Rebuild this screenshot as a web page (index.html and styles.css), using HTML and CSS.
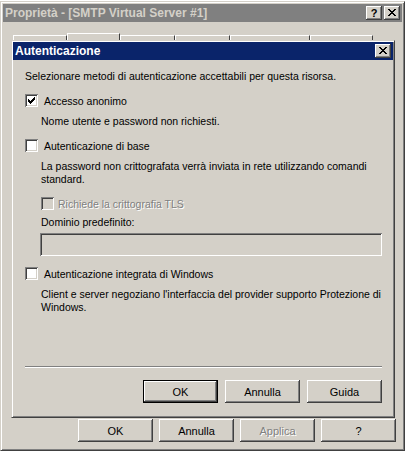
FILE: index.html
```html
<!DOCTYPE html>
<html lang="it">

<head>
    <meta charset="UTF-8">
    <meta name="viewport" content="width=device-width, initial-scale=1.0">
    <title>Autenticazione</title>
    <link rel="stylesheet" href="styles.css">
</head>

<body>
    <div class="window">
        <div class="titlebar inactive">
            <span class="title">Proprietà - [SMTP Virtual Server #1]</span>
            <div class="caption-buttons">
                <span class="cap-btn help">?</span>
                <span class="cap-btn close">
                    <svg width="8" height="7" viewBox="0 0 8 7"><path d="M0 0h2v1h-2zM6 0h2v1h-2zM1 1h2v1h-2zM5 1h2v1h-2zM2 2h4v1h-4zM3 3h2v1h-2zM2 4h4v1h-4zM1 5h2v1h-2zM5 5h2v1h-2zM0 6h2v1h-2zM6 6h2v1h-2z" fill="#000"/></svg>
                </span>
            </div>
        </div>

        <div class="tabs">
            <span class="tab" style="width:54px"></span>
            <span class="tab selected" style="width:53px"></span>
            <span class="tab" style="width:55px"></span>
            <span class="tab" style="width:55px"></span>
            <span class="tab" style="width:80px"></span>
            <span class="tab" style="width:63px"></span>
        </div>

        <div class="dialog">
            <div class="titlebar active">
                <span class="title">Autenticazione</span>
                <span class="cap-btn close">
                    <svg width="8" height="7" viewBox="0 0 8 7"><path d="M0 0h2v1h-2zM6 0h2v1h-2zM1 1h2v1h-2zM5 1h2v1h-2zM2 2h4v1h-4zM3 3h2v1h-2zM2 4h4v1h-4zM1 5h2v1h-2zM5 5h2v1h-2zM0 6h2v1h-2zM6 6h2v1h-2z" fill="#000"/></svg>
                </span>
            </div>

            <div class="dialog-body">
                <p class="text intro">Selezionare metodi di autenticazione accettabili per questa risorsa.</p>

                <label class="check first">
                    <span class="box">
                        <svg width="7" height="7" viewBox="0 0 7 7"><path d="M0 2h1v3h-1zM1 3h1v3h-1zM2 4h1v3h-1zM3 3h1v3h-1zM4 2h1v3h-1zM5 1h1v3h-1zM6 0h1v3h-1z" fill="#000"/></svg>
                    </span>
                    Accesso anonimo
                </label>
                <p class="text note">Nome utente e password non richiesti.</p>

                <label class="check">
                    <span class="box"></span>
                    Autenticazione di base
                </label>
                <p class="text note">La password non crittografata verrà inviata in rete utilizzando comandi standard.</p>

                <label class="check sub disabled">
                    <span class="box"></span>
                    Richiede la crittografia TLS
                </label>
                <p class="text field-label">Dominio predefinito:</p>
                <div class="textbox"></div>

                <label class="check">
                    <span class="box"></span>
                    Autenticazione integrata di Windows
                </label>
                <p class="text note">Client e server negoziano l'interfaccia del provider supporto Protezione di Windows.</p>

                <div class="separator"></div>

                <div class="button-row">
                    <button class="btn default">OK</button>
                    <button class="btn">Annulla</button>
                    <button class="btn">Guida</button>
                </div>
            </div>
        </div>

        <div class="sheet-buttons">
            <button class="btn">OK</button>
            <button class="btn">Annulla</button>
            <button class="btn" disabled>Applica</button>
            <button class="btn">?</button>
        </div>
    </div>
</body>

</html>
```

FILE: styles.css
```css
body {
    margin: 0;
    background: #fff;
    font-family: "Liberation Sans", Arial, sans-serif;
    font-size: 10.5px;
    color: #000;
}

.window {
    margin-top: 1px;
    width: 405px;
    height: 450px;
    box-sizing: border-box;
    background: #d4d0c8;
    border: 1px solid;
    border-color: #d4d0c8 #404040 #404040 #d4d0c8;
    box-shadow: inset 1px 1px #fff, inset -1px -1px #808080;
    padding: 2px;
    display: flex;
    flex-direction: column;
}

.titlebar {
    height: 18px;
    display: flex;
    align-items: center;
    justify-content: space-between;
    padding: 0 2px 0 2px;
    flex-shrink: 0;
}

.titlebar .title {
    font-weight: bold;
    font-size: 12px;
}

.inactive {
    background: #808080;
    color: #d4d0c8;
}

.active {
    background: #0a246a;
    color: #fff;
}

.caption-buttons {
    display: flex;
    gap: 2px;
}

.cap-btn {
    width: 16px;
    height: 14px;
    box-sizing: border-box;
    background: #d4d0c8;
    box-shadow: inset -1px -1px #404040, inset 1px 1px #fff, inset -2px -2px #808080;
    display: flex;
    align-items: center;
    justify-content: center;
    color: #000;
    font-weight: bold;
    font-size: 11px;
    line-height: 14px;
    padding-bottom: 1px;
}

.tabs {
    height: 18px;
    display: flex;
    align-items: flex-end;
    padding-left: 10px;
    flex-shrink: 0;
}

.tab {
    height: 5px;
    box-sizing: border-box;
    border-top: 1px solid #fff;
    border-left: 1px solid #fff;
    border-right: 1px solid #404040;
}

.tab.selected {
    height: 7px;
}

.dialog {
    margin-left: 8px;
    width: 384px;
    height: 378px;
    box-sizing: border-box;
    border: 1px solid;
    border-color: #d4d0c8 #404040 #404040 #d4d0c8;
    box-shadow: inset 1px 1px #fff, inset -1px -1px #808080;
    padding: 1px;
    display: flex;
    flex-direction: column;
}

.dialog-body {
    padding: 10px 11px 0 12px;
}

.text {
    margin: 0;
    line-height: 13px;
}

.note {
    margin: 8px 0 0 16px;
    width: 342px;
}

.check {
    display: flex;
    align-items: center;
    gap: 6px;
    height: 13px;
    margin-top: 11px;
}

.check.sub {
    margin-left: 16px;
    gap: 4px;
}

.box {
    width: 13px;
    height: 13px;
    box-sizing: border-box;
    background: #fff;
    box-shadow: inset 1px 1px #808080, inset -1px -1px #fff, inset 2px 2px #404040, inset -2px -2px #d4d0c8;
    display: flex;
    align-items: center;
    justify-content: center;
    flex-shrink: 0;
}

.disabled {
    color: #808080;
    text-shadow: 1px 1px #fff;
}

.disabled .box {
    background: #d4d0c8;
}

.field-label {
    margin: 6px 0 0 16px;
}

.textbox {
    margin: 4px 0 0 15px;
    width: 342px;
    height: 23px;
    box-sizing: border-box;
    background: #d4d0c8;
    box-shadow: inset 1px 1px #808080, inset -1px -1px #fff, inset 2px 2px #404040, inset -2px -2px #d4d0c8;
}

.separator {
    margin-top: 52px;
    height: 0;
    border-top: 1px solid #808080;
    border-bottom: 1px solid #fff;
}

.button-row {
    margin-top: 12px;
    display: flex;
    justify-content: flex-end;
    gap: 7px;
}

.btn {
    width: 75px;
    height: 23px;
    box-sizing: border-box;
    font-family: "Liberation Sans", Arial, sans-serif;
    font-size: 11px;
    color: #000;
    background: #d4d0c8;
    border: none;
    padding: 0;
    box-shadow: inset -1px -1px #404040, inset 1px 1px #fff, inset -2px -2px #808080;
}

.btn.default {
    border: 1px solid #000;
}

.btn:disabled {
    color: #808080;
    text-shadow: 1px 1px #fff;
}

.sheet-buttons {
    margin-top: 1px;
    display: flex;
    justify-content: flex-end;
    gap: 6px;
    padding-right: 6px;
}
```
